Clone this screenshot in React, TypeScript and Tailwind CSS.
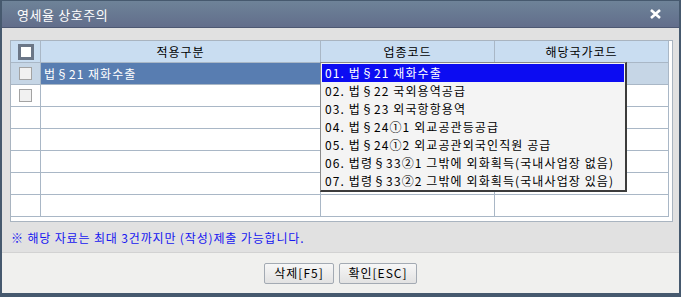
import React from 'react'

const codes = [
  '01. 법§21 재화수출',
  '02. 법§22 국외용역공급',
  '03. 법§23 외국항항용역',
  '04. 법§24①1 외교공관등공급',
  '05. 법§24①2 외교공관외국인직원 공급',
  '06. 법령§33②1 그밖에 외화획득(국내사업장 없음)',
  '07. 법령§33②2 그밖에 외화획득(국내사업장 있음)',
]

const rows = [
  { check: true, type: '법§21 재화수출', selected: true },
  { check: true, type: '', selected: false },
  { check: false, type: '', selected: false },
  { check: false, type: '', selected: false },
  { check: false, type: '', selected: false },
  { check: false, type: '', selected: false },
  { check: false, type: '', selected: false },
]

const cell = 'h-[22px] border-r border-b border-[#a9b7c6] flex items-center'

function RowCheck() {
  return <div className="w-[13px] h-[13px] bg-[#f1f1f1] border border-[#a3a3a3]" />
}

export default function App() {
  return (
    <div className="w-[681px] h-[297px] bg-[#46596e] pt-[1px] px-[2px] pb-[4px] flex flex-col font-['Noto_Sans_CJK_KR',sans-serif] text-[12px] text-black">
      {/* title bar */}
      <div className="h-[26px] shrink-0 flex items-center justify-between pl-[15px] pr-[18px] bg-gradient-to-b from-[#6e8398] to-[#626e8b]">
        <span className="text-white text-[13px] tracking-[0.6px] leading-none">영세율 상호주의</span>
        <svg width="11" height="10" viewBox="0 0 11 10">
          <path d="M1 1 L10 9 M10 1 L1 9" stroke="#fff" strokeWidth="2.6" />
        </svg>
      </div>
      <div className="h-[1px] shrink-0 bg-[#4d5872]" />

      {/* body */}
      <div className="h-[224px] shrink-0 bg-[#e1e1e1] pl-[8px] pt-[12px]">
        <div className="relative w-[663px] h-[182px] bg-white border border-[#a9b4c0]">
          <div className="grid grid-cols-[30px_280px_174px_174px] w-[658px]">
            {/* header */}
            <div className={`${cell} justify-center bg-[#c9ddf1]`}>
              <div className="w-[16px] h-[16px] bg-white border-[3px] border-[#6b7687]" />
            </div>
            <div className={`${cell} justify-center bg-[#c9ddf1] tracking-[1px]`}>적용구분</div>
            <div className={`${cell} justify-center bg-[#c9ddf1] tracking-[1px]`}>업종코드</div>
            <div className={`${cell} justify-center bg-[#c9ddf1] tracking-[1px]`}>해당국가코드</div>

            {rows.map((r, i) => (
              <React.Fragment key={i}>
                <div className={`${cell} justify-center ${r.selected ? 'bg-[#c6d6e6]' : 'bg-white'}`}>
                  {r.check && <RowCheck />}
                </div>
                <div className={`${cell} pl-[3px] tracking-[1px] ${r.selected ? 'bg-[#587db1] text-white' : 'bg-white'}`}>
                  {r.type}
                </div>
                <div className={`${cell} ${r.selected ? 'bg-[#c6d6e6]' : 'bg-white'}`} />
                <div className={`${cell} ${r.selected ? 'bg-[#c6d6e6]' : 'bg-white'}`} />
              </React.Fragment>
            ))}
          </div>

          {/* dropdown list */}
          <div className="absolute left-[309px] top-[21px] w-[307px] h-[130px] bg-[#f4f4f4] border border-[#8a8a8a] border-r-[2px] border-b-[2px] border-r-[#3c3c3c] border-b-[#3c3c3c] pt-[1px] px-[1px]">
            {codes.map((c, i) => (
              <div
                key={c}
                className={`h-[18px] flex items-center pl-[3px] tracking-[1.1px] whitespace-nowrap ${i === 0 ? 'bg-[#0c0cf2] text-white' : ''}`}
              >
                {c}
              </div>
            ))}
          </div>
        </div>

        <p className="mt-[10px] ml-[1px] text-[#1616f0] tracking-[0.85px] leading-none">
          ※ 해당 자료는 최대 3건까지만 (작성)제출 가능합니다.
        </p>
      </div>

      {/* footer */}
      <div className="flex-1 bg-[#f0f0ee] border-t border-[#d2d2d2] flex items-center justify-center gap-[5px]">
        <button className="w-[70px] h-[21px] rounded-[2px] border border-[#a3aab3] bg-gradient-to-b from-[#f7f7f7] to-[#e2e2e2] text-[12px] tracking-[1px] leading-none">
          삭제[F5]
        </button>
        <button className="w-[78px] h-[21px] rounded-[2px] border border-[#a3aab3] bg-gradient-to-b from-[#f7f7f7] to-[#e2e2e2] text-[12px] tracking-[1px] leading-none">
          확인[ESC]
        </button>
      </div>
    </div>
  )
}
